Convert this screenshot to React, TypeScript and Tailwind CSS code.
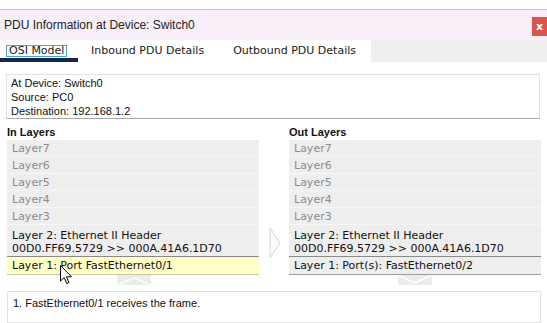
import React from "react";

const dv = { fontFamily: '"DejaVu Sans", Verdana, sans-serif' };
const ar = { fontFamily: '"Liberation Sans", Arial, sans-serif' };

function GrayRow({ label }: { label: string }) {
  return (
    <div className="h-[17px] flex items-center pl-[5px] pt-[1px] text-[11px] text-[#8c8c8c] border-b border-[#f6f6f6] leading-none" style={dv}>
      {label}
    </div>
  );
}

function LayerColumn({ title, l1, l1Yellow }: { title: string; l1: string; l1Yellow?: boolean }) {
  return (
    <div className="w-[252px] flex flex-col">
      <div className="h-[21px] flex items-end pb-[2px] text-[11px] font-bold text-[#111] leading-none" style={ar}>
        {title}
      </div>
      <div className="bg-[#eeeeee] flex flex-col">
        <GrayRow label="Layer7" />
        <GrayRow label="Layer6" />
        <GrayRow label="Layer5" />
        <GrayRow label="Layer4" />
        <GrayRow label="Layer3" />
        <div className="h-[32px] flex flex-col justify-center pl-[5px] pt-[2px] text-[11px] text-[#111] leading-[13px] border-b border-[#8a8a8a]" style={dv}>
          <div>Layer 2: Ethernet II Header</div>
          <div>00D0.FF69.5729 &gt;&gt; 000A.41A6.1D70</div>
        </div>
        <div
          className={
            l1Yellow
              ? "h-[18px] flex items-center pl-[5px] text-[11px] text-[#111] bg-[#ffffc6] border-b border-[#c8c8a8] leading-none"
              : "h-[18px] flex items-center pl-[5px] text-[11px] text-[#111] bg-[#eeeeee] border-b border-[#9a9a9a] leading-none"
          }
          style={dv}
        >
          {l1}
        </div>
      </div>
    </div>
  );
}

export default function App() {
  return (
    <div className="w-[547px] h-[323px] overflow-hidden bg-white relative flex flex-col">
      <div className="h-[10px] border-b border-[#c8c8c8] shrink-0" />
      <div className="h-[30px] bg-[#f8eff8] flex items-center justify-between pl-[4px] shrink-0">
        <span className="text-[12px] text-[#222]" style={ar}>
          PDU Information at Device: Switch0
        </span>
        <div className="w-[15px] h-[19px] mt-[3px] bg-[#d9534f] flex items-center justify-center text-white text-[11px] font-bold leading-none" style={dv}>
          x
        </div>
      </div>
      <div className="h-[22px] flex shrink-0">
        <div className="w-[371px] bg-white flex text-[11px] text-[#1a1a1a]" style={dv}>
          <div className="w-[78px] h-[22px] relative flex items-center pl-[6px] border-b-[4px] border-[#13294a]">
            <span className="px-[2px] border border-[#4aa3d8] leading-[10px] mt-[3px]">OSI Model</span>
          </div>
          <div className="pl-[13px] flex items-center pt-[1px]">Inbound PDU Details</div>
          <div className="pl-[29px] flex items-center pt-[1px]">Outbound PDU Details</div>
        </div>
        <div className="flex-1 bg-[#efefef]" />
      </div>
      <div className="h-[12px] shrink-0" />
      <div className="mx-[6px] w-[534px] h-[45px] border border-[#e2e2e2] border-b-[#a8a8a8] pl-[4px] pt-[1px] text-[11px] text-[#111] leading-[14px] shrink-0" style={ar}>
        <div>At Device: Switch0</div>
        <div>Source: PC0</div>
        <div>Destination: 192.168.1.2</div>
      </div>
      <div className="flex pl-[7px] shrink-0">
        <LayerColumn title="In Layers" l1="Layer 1: Port FastEthernet0/1" l1Yellow />
        <div className="w-[30px] flex flex-col">
          <div className="h-[108px]" />
          <svg width="14" height="32" viewBox="0 0 14 32" className="ml-[10px]">
            <path d="M1 1 L11 16 L1 31 Z" fill="#fafafa" stroke="#d4d4d4" strokeWidth="1" />
          </svg>
        </div>
        <LayerColumn title="Out Layers" l1="Layer 1: Port(s): FastEthernet0/2" />
      </div>
      <div className="h-[10px] flex shrink-0">
        <svg width="34" height="10" viewBox="0 0 34 10" className="ml-[117px]">
          <rect x="0" y="0" width="34" height="10" fill="#ececec" />
          <polyline points="0,10 17,3 34,10" fill="none" stroke="#ffffff" strokeWidth="1.5" />
        </svg>
        <svg width="34" height="10" viewBox="0 0 34 10" className="ml-[247px]">
          <rect x="0" y="0" width="34" height="10" fill="#ececec" />
          <polyline points="0,0 17,8 34,0" fill="none" stroke="#ffffff" strokeWidth="1.5" />
        </svg>
      </div>
      <div className="h-[6px] shrink-0" />
      <div className="mx-[7px] w-[534px] flex-1 border border-[#e2e2e2] pl-[5px] pt-[3px] text-[11px] text-[#111]" style={ar}>
        1. FastEthernet0/1 receives the frame.
      </div>
      <svg width="14" height="22" viewBox="0 0 14 22" className="absolute left-[60px] top-[265px]">
        <path d="M0.5 0.5 L0.5 16 L4.2 12.6 L6.8 18.6 L9 17.6 L6.5 11.8 L11.5 11.8 Z" fill="#ffffff" stroke="#000000" strokeWidth="1" strokeLinejoin="round" />
      </svg>
    </div>
  );
}
